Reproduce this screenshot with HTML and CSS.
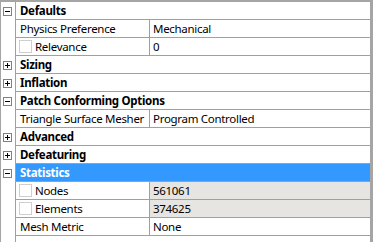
FILE: index.html
```html
<!DOCTYPE html>
<html>
<head>
<meta charset="utf-8">
<link rel="stylesheet" href="styles.css">
</head>
<body>
<div class="frame">
  <div class="row cat"><div class="gut"><span class="exp minus"></span></div><div class="full">Defaults</div></div>
  <div class="row"><div class="gut"></div><div class="name">Physics Preference</div><div class="val">Mechanical</div></div>
  <div class="row"><div class="gut"></div><div class="name"><span class="chk"></span>Relevance</div><div class="val">0</div></div>
  <div class="row cat"><div class="gut"><span class="exp plus"></span></div><div class="full">Sizing</div></div>
  <div class="row cat"><div class="gut"><span class="exp plus"></span></div><div class="full">Inflation</div></div>
  <div class="row cat"><div class="gut"><span class="exp minus"></span></div><div class="full">Patch Conforming Options</div></div>
  <div class="row"><div class="gut"></div><div class="name">Triangle Surface Mesher</div><div class="val">Program Controlled</div></div>
  <div class="row cat"><div class="gut"><span class="exp plus"></span></div><div class="full">Advanced</div></div>
  <div class="row cat"><div class="gut"><span class="exp plus"></span></div><div class="full">Defeaturing</div></div>
  <div class="row cat sel"><div class="gut"><span class="exp minus"></span></div><div class="full">Statistics</div></div>
  <div class="row"><div class="gut"></div><div class="name"><span class="chk"></span>Nodes</div><div class="val ro">561061</div></div>
  <div class="row"><div class="gut"></div><div class="name"><span class="chk"></span>Elements</div><div class="val ro">374625</div></div>
  <div class="row"><div class="gut"></div><div class="name">Mesh Metric</div><div class="val">None</div></div>
  <div class="filler"><div class="gut"></div></div>
</div>
</body>
</html>
```
FILE: styles.css
```css
* { box-sizing: border-box; }
html, body { margin: 0; padding: 0; background: #fff; }
body {
  font-family: "Noto Sans", "Open Sans", sans-serif;
  font-size: 11.5px;
  letter-spacing: -0.3px;
  color: #000;
}
.frame {
  width: 373px;
  height: 242px;
  border-top: 2px solid #a5a5a5;
  border-left: 1px solid #a5a5a5;
  border-right: 3px solid #a5a5a5;
  display: flex;
  flex-direction: column;
}
.row {
  display: flex;
  height: 18px;
}
.gut {
  width: 15px;
  flex: none;
  border-right: 1px solid #a0a0a0;
  display: flex;
  align-items: center;
  justify-content: center;
  padding-right: 1px;
}
.full, .name, .val {
  border-bottom: 1px solid #a0a0a0;
  display: flex;
  align-items: center;
  white-space: nowrap;
  line-height: 17px;
  overflow: hidden;
}
.full {
  flex: 1;
  padding-left: 4px;
  font-weight: bold;
}
.name {
  width: 134px;
  flex: none;
  padding-left: 4px;
  border-right: 1px solid #a0a0a0;
}
.val {
  flex: 1;
  padding-left: 3px;
}
.val.ro { background: #e6e5e1; }
.sel .full { background: #3399ff; color: #fff; }
.chk {
  width: 13px;
  height: 13px;
  border: 1px solid #cfcfcf;
  background: #fff;
  margin-left: -1px;
  margin-right: 3px;
  flex: none;
}
.exp {
  width: 9px;
  height: 9px;
  border: 1px solid #808080;
  position: relative;
  background: #fff;
}
.exp::before {
  content: "";
  position: absolute;
  left: 1px;
  top: 3px;
  width: 5px;
  height: 1px;
  background: #000;
}
.exp.plus::after {
  content: "";
  position: absolute;
  left: 3px;
  top: 1px;
  width: 1px;
  height: 5px;
  background: #000;
}
.filler {
  flex: 1;
  display: flex;
}
```
